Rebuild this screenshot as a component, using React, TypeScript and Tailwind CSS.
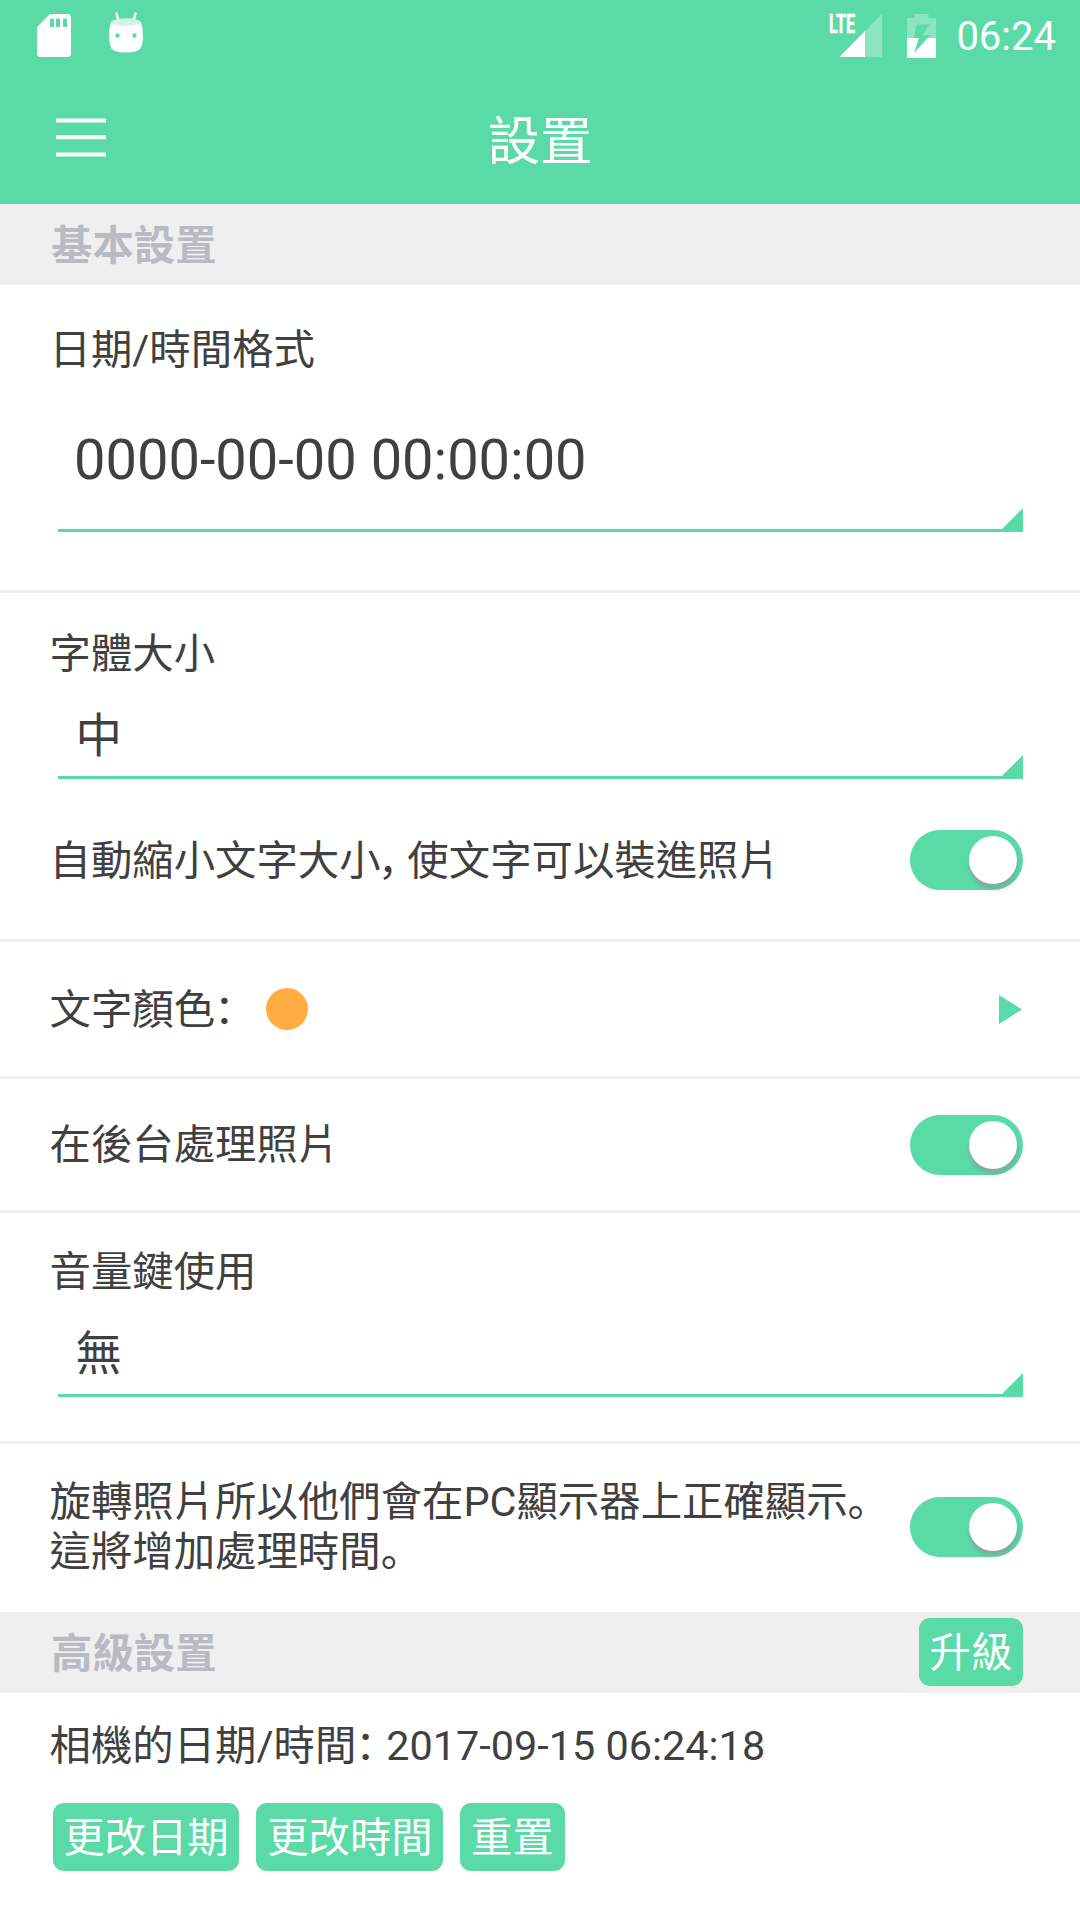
import { useState } from 'react';
import type { ReactNode } from 'react';

const SdCardIcon = () => (
  <svg width="34" height="43" viewBox="0 0 34 43" aria-hidden>
    <path
      fill="#fff"
      fillRule="evenodd"
      d="M13 0H30.5Q34 0 34 3.5V39.5Q34 43 30.5 43H3.5Q0 43 0 39.5V13ZM13 4.5V13H17V4.5ZM19 4.5V13H23V4.5ZM26 4.5V13H30V4.5Z"
    />
  </svg>
);

const AndroidIcon = () => (
  <svg width="34" height="42" viewBox="0 0 34 42" aria-hidden>
    <path d="M7.5 1.5L9.5 9M26.5 1.5L24.5 9" stroke="#fff" strokeWidth="2.4" strokeLinecap="round" />
    <path
      fill="#fff"
      fillRule="evenodd"
      d="M2 10Q17 16 32 10Q34 16 34 24Q34 32 31.5 36.5Q28 40.5 17 40.5Q6 40.5 2.5 36.5Q0 32 0 24Q0 16 2 10ZM8.5 21.3a2.2 2.2 0 1 0 0 4.4a2.2 2.2 0 1 0 0-4.4ZM25.5 21.3a2.2 2.2 0 1 0 0 4.4a2.2 2.2 0 1 0 0-4.4Z"
    />
    <ellipse cx="17" cy="10.2" rx="14.5" ry="3.9" fill="#d3f5e6" />
  </svg>
);

const SignalIcon = () => (
  <svg width="53" height="57" viewBox="0 -14 53 57" aria-hidden>
    <path d="M53 0V43H10.5Z" fill="#fff" fillOpacity="0.3" />
    <path d="M36 17V43H10.5Z" fill="#fff" />
    <text
      x="0"
      y="19"
      fill="#fff"
      stroke="#fff"
      strokeWidth="0.6"
      textLength="26"
      lengthAdjust="spacingAndGlyphs"
      className="font-['Roboto',sans-serif] text-[26px] leading-none font-bold"
    >
      LTE
    </text>
  </svg>
);

const BatteryIcon = () => (
  <svg width="29" height="44" viewBox="0 0 29 44" aria-hidden>
    <path
      fillRule="evenodd"
      d="M7.5 0H21.5V4H29V24H0V4H7.5ZM9.7 10.5H22.3L15.5 21H23.5L20.6 24H6.7Z"
      fill="#fff"
      fillOpacity="0.3"
    />
    <path d="M0 24H12L7 39.3L20.6 24H29V44H0Z" fill="#fff" />
  </svg>
);

const MenuIcon = () => (
  <svg width="50" height="39" viewBox="0 0 50 39" aria-hidden>
    <path d="M0 2.5H50M0 19.2H50M0 36.5H50" stroke="#fff" strokeWidth="4" />
  </svg>
);

const SectionTitle = ({ title, children }: { title: string; children?: ReactNode }) => (
  <div className="flex h-[81px] items-start justify-between bg-[#efefef] pr-[57px] pl-[51px]">
    <h2 className="pt-[17px] text-[41.4px] leading-[50px] font-bold text-[#b8bcc2]">{title}</h2>
    {children}
  </div>
);

const Label = ({ children }: { children: ReactNode }) => (
  <div className="text-[41.4px] leading-[50px] whitespace-nowrap">{children}</div>
);

// left-aligned punctuation glyphs, comma and colon set half-width
const Stop = () => <span className="font-['Noto_Sans_CJK_SC',sans-serif] leading-none">。</span>;
const Half = ({ children }: { children: string }) => (
  <span className="-ml-px font-['Noto_Sans_CJK_SC',sans-serif] leading-none [font-feature-settings:'halt']">
    {children}
  </span>
);

const Spinner = ({ value, className }: { value: string; className: string }) => (
  <div className={`relative ml-[8px] border-b-3 border-[#5adaa6] ${className}`}>
    {value}
    <svg className="absolute right-0 -bottom-[3px]" width="24" height="24" viewBox="0 0 24 24" aria-hidden>
      <path d="M24 0V24H0Z" fill="#5adaa6" />
    </svg>
  </div>
);

const Toggle = ({ label }: { label: string }) => {
  const [on, setOn] = useState(true);
  return (
    <button
      type="button"
      role="switch"
      aria-checked={on}
      aria-label={label}
      onClick={() => setOn(!on)}
      className={`flex h-[60px] w-[113px] shrink-0 items-center rounded-full px-[6px] ${
        on ? 'justify-end bg-[#5adaa6]' : 'justify-start bg-[#dddddd]'
      }`}
    >
      <span className="size-[48px] rounded-full bg-white shadow-[0_4px_3px_rgba(160,150,165,0.6),2px_7px_5px_rgba(0,0,0,0.06)]" />
    </button>
  );
};

const Button = ({ children }: { children: string }) => (
  <button
    type="button"
    className="h-[68px] rounded-[11px] bg-[#5adaa6] px-[10.7px] pt-[2px] text-[41.4px] leading-[66px] text-white"
  >
    {children}
  </button>
);

export default function App() {
  return (
    <div className="h-[1920px] w-[1080px] overflow-hidden bg-white font-['Roboto','Noto_Sans_CJK_TC',sans-serif] text-[#404040]">
      <header className="h-[204px] bg-[#5adaa6] text-white">
        <div className="flex h-[72px] items-start justify-between pr-[24px] pl-[37px]">
          <div className="flex gap-[38px]">
            <div className="pt-[14px]"><SdCardIcon /></div>
            <div className="pt-[12px]"><AndroidIcon /></div>
          </div>
          <div className="flex">
            <SignalIcon />
            <div className="ml-[25px] pt-[14px]"><BatteryIcon /></div>
            <div className="ml-[20px] pt-px text-[40px] leading-[72px]">06:24</div>
          </div>
        </div>
        <div className="grid h-[132px] grid-cols-[1fr_auto_1fr] items-start px-[56px]">
          <button type="button" aria-label="選單" className="mt-[46px] w-[50px]"><MenuIcon /></button>
          <h1 className="pt-[40px] text-[52.5px] leading-[60px]">設置</h1>
        </div>
      </header>

      <SectionTitle title="基本設置" />

      <section className="h-[308px] border-b-3 border-[#efefef] pt-[40px] pr-[57px] pl-[49.5px]">
        <Label>日期/時間格式</Label>
        <Spinner value="0000-00-00 00:00:00" className="mt-[47px] h-[110px] pl-[16.5px] text-[56px] leading-[76px]" />
      </section>

      <section className="h-[349px] border-b-3 border-[#efefef] pt-[36px] pr-[57px] pl-[49.5px]">
        <Label>字體大小</Label>
        <Spinner value="中" className="mt-[25px] h-[75px] pl-[18px] text-[46.5px] leading-[64px]" />
        <div className="mt-[51px] flex h-[60px] items-center justify-between">
          <div className="pt-[2px]">
            <Label>
              自動縮小文字大小<span className="mr-[9px] -ml-[2px]"><Half>，</Half></span>使文字可以裝進照片
            </Label>
          </div>
          <Toggle label="自動縮小文字大小" />
        </div>
      </section>

      <section className="flex h-[137px] items-center border-b-3 border-[#efefef] pr-[57px] pl-[49.5px]">
        <div className="w-[216.5px] pt-[1px]">
          <Label>文字顏色<Half>：</Half></Label>
        </div>
        <span className="size-[42px] rounded-full bg-[#ffac40]" />
        <svg className="mr-px ml-auto" width="23" height="29" viewBox="0 0 23 29" aria-hidden>
          <path d="M0 0L23 14.5L0 29Z" fill="#5adaa6" />
        </svg>
      </section>

      <section className="flex h-[134px] items-center justify-between border-b-3 border-[#efefef] pr-[57px] pl-[49.5px]">
        <Label>在後台處理照片</Label>
        <Toggle label="在後台處理照片" />
      </section>

      <section className="h-[231px] border-b-3 border-[#efefef] pt-[34px] pr-[57px] pl-[49.5px]">
        <Label>音量鍵使用</Label>
        <Spinner value="無" className="mt-[25px] h-[75px] pl-[18px] text-[46.5px] leading-[64px]" />
      </section>

      <section className="flex h-[168px] items-center justify-between pr-[57px] pb-[2px] pl-[49.5px]">
        <Label>
          旋轉照片所以他們會在PC顯示器上正確顯示<Stop />
          <br />
          這將增加處理時間<Stop />
        </Label>
        <Toggle label="旋轉照片" />
      </section>

      <SectionTitle title="高級設置">
        <div className="pt-[6px]">
          <Button>升級</Button>
        </div>
      </SectionTitle>

      <section className="pt-[28px] pl-[49.5px]">
        <Label>相機的日期/時間<Half>：</Half> 2017-09-15 06:24:18</Label>
        <div className="mt-[32px] ml-[3px] flex gap-[17px]">
          <Button>更改日期</Button>
          <Button>更改時間</Button>
          <Button>重置</Button>
        </div>
      </section>
    </div>
  );
}
